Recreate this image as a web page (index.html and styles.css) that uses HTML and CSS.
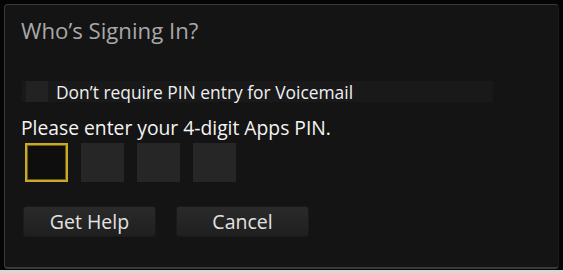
FILE: index.html
```html
<!DOCTYPE html>
<html>
<head>
<meta charset="utf-8">
<link rel="stylesheet" href="styles.css">
</head>
<body>
<div class="screen">
  <div class="dialog">
    <h1 class="title">Who’s Signing In?</h1>
    <label class="check-row">
      <span class="checkbox"></span>
      <span class="check-label">Don’t require PIN entry for Voicemail</span>
    </label>
    <p class="prompt">Please enter your 4-digit Apps PIN.</p>
    <div class="pin">
      <span class="digit active"></span>
      <span class="digit"></span>
      <span class="digit"></span>
      <span class="digit"></span>
    </div>
    <div class="actions">
      <button class="btn">Get Help</button>
      <button class="btn">Cancel</button>
    </div>
  </div>
</div>
<div class="strip"></div>
</body>
</html>
```

FILE: styles.css
```css
html, body {
  margin: 0;
  padding: 0;
  width: 563px;
  height: 273px;
  overflow: hidden;
  background: #050505;
  font-family: "Open Sans", "Noto Sans", sans-serif;
}
.screen {
  height: 270px;
  padding: 4px 4px 0 4px;
  box-sizing: border-box;
}
.dialog {
  width: 555px;
  height: 265px;
  box-sizing: border-box;
  background: #141414;
  border: 1px solid #3a3a3a;
  border-right-color: #1c1c1c;
  border-bottom: 2px solid #3a3a3a;
  border-radius: 4px;
  padding: 11px 0 0 16px;
}
.title {
  margin: 0;
  font-weight: 400;
  font-size: 22.2px;
  line-height: 30px;
  color: #a8a8a8;
}
.check-row {
  display: flex;
  align-items: center;
  width: 471px;
  height: 21px;
  margin: 35px 0 0 1px;
  background: #191919;
}
.checkbox {
  width: 22px;
  height: 21px;
  margin-left: 4px;
  background: #222;
}
.check-label {
  margin-left: 8px;
  font-size: 17.4px;
  color: #f0f0f0;
}
.prompt {
  margin: 13px 0 0 0;
  font-size: 19.3px;
  line-height: 26px;
  color: #f4f4f4;
}
.pin {
  display: flex;
  gap: 13px;
  margin: 2px 0 0 4px;
}
.digit {
  width: 43px;
  height: 39px;
  box-sizing: border-box;
  background: #262626;
}
.digit.active {
  background: #0e0e0e;
  border: 2px solid #c9a82a;
  box-shadow: inset 0 0 0 1px #6b5a14;
}
.actions {
  display: flex;
  gap: 20px;
  margin: 24px 0 0 2px;
}
.btn {
  width: 133px;
  height: 31px;
  border: 1px solid #1a1a1a;
  border-radius: 3px;
  background: linear-gradient(#2a2a2a, #1f1f1f);
  color: #e2e2e2;
  font-family: "Open Sans", "Noto Sans", sans-serif;
  font-size: 19.5px;
  line-height: 29px;
  padding: 0;
}
.strip {
  height: 3px;
  background: #d8d8d8;
}
```
